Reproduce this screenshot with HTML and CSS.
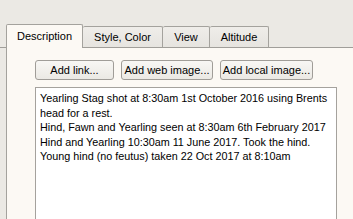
FILE: index.html
```html
<!DOCTYPE html>
<html>
<head>
<meta charset="utf-8">
<link rel="stylesheet" href="styles.css">
</head>
<body>
<div class="window">
  <div class="tabbar">
    <div class="lead"></div>
    <div class="tab active">Description</div>
    <div class="tab t-style">Style, Color</div>
    <div class="tab t-view">View</div>
    <div class="tab t-alt">Altitude</div>
    <div class="fill"></div>
  </div>
  <div class="pane">
    <div class="buttons">
      <button class="btn b1">Add link...</button>
      <button class="btn b2">Add web image...</button>
      <button class="btn b3">Add local image...</button>
    </div>
    <div class="editor">
      <div>Yearling Stag shot at 8:30am 1st October 2016 using Brents head for a rest.</div>
      <div>Hind, Fawn and Yearling seen at 8:30am 6th February 2017</div>
      <div>Hind and Yearling 10:30am 11 June 2017. Took the hind.</div>
      <div>Young hind (no feutus) taken 22 Oct 2017 at 8:10am</div>
    </div>
  </div>
</div>
</body>
</html>
```

FILE: styles.css
```css
html, body {
  margin: 0;
  padding: 0;
  height: 100%;
  overflow: hidden;
}
body {
  background: #ebe9e4;
  font-family: "Liberation Sans", Arial, sans-serif;
  font-size: 11px;
  color: #000;
}
.window {
  padding-top: 24px;
  height: 195px;
  display: flex;
  flex-direction: column;
}
.tabbar {
  display: flex;
  align-items: flex-end;
  height: 24px;
  flex: none;
}
.lead {
  width: 6px;
  height: 0;
  border-bottom: 1px solid #a09e99;
}
.tab {
  box-sizing: border-box;
  height: 22px;
  border: 1px solid #a4a29d;
  border-left: none;
  border-bottom: 1px solid #a09e99;
  background: linear-gradient(#efede9, #e6e4df);
  border-radius: 2px 2px 0 0;
  display: flex;
  align-items: center;
  justify-content: center;
  color: #000;
}
.tab.active {
  height: 24px;
  width: 77px;
  border-left: 1px solid #a4a29d;
  border-bottom: none;
  background: #fcf9f4;
  padding-bottom: 1px;
}
.t-style { width: 80px; }
.t-view { width: 47px; }
.t-alt { width: 59px; }
.fill {
  flex: 1;
  border-bottom: 1px solid #a09e99;
}
.pane {
  flex: 1;
  margin-left: 6px;
  border-left: 1px solid #a4a29d;
  background: #fcf9f4;
  padding: 12px 0 0 28px;
  display: flex;
  flex-direction: column;
}
.buttons {
  display: flex;
  gap: 7px;
  flex: none;
}
.btn {
  box-sizing: border-box;
  height: 20px;
  font-family: inherit;
  font-size: 11px;
  color: #000;
  background: linear-gradient(#f8f7f4, #ebe9e4);
  border: 1px solid #a09d98;
  border-radius: 3px;
  padding: 0;
  margin: 0;
}
.b1 { width: 79px; }
.b2 { width: 92px; }
.b3 { width: 93px; }
.editor {
  margin-top: 7px;
  width: 302px;
  box-sizing: border-box;
  flex: 1;
  background: #fff;
  border: 1px solid #a5a29d;
  border-bottom: none;
  padding: 3px 2px 0 4px;
  font-size: 10.8px;
  line-height: 14.5px;
}
```
